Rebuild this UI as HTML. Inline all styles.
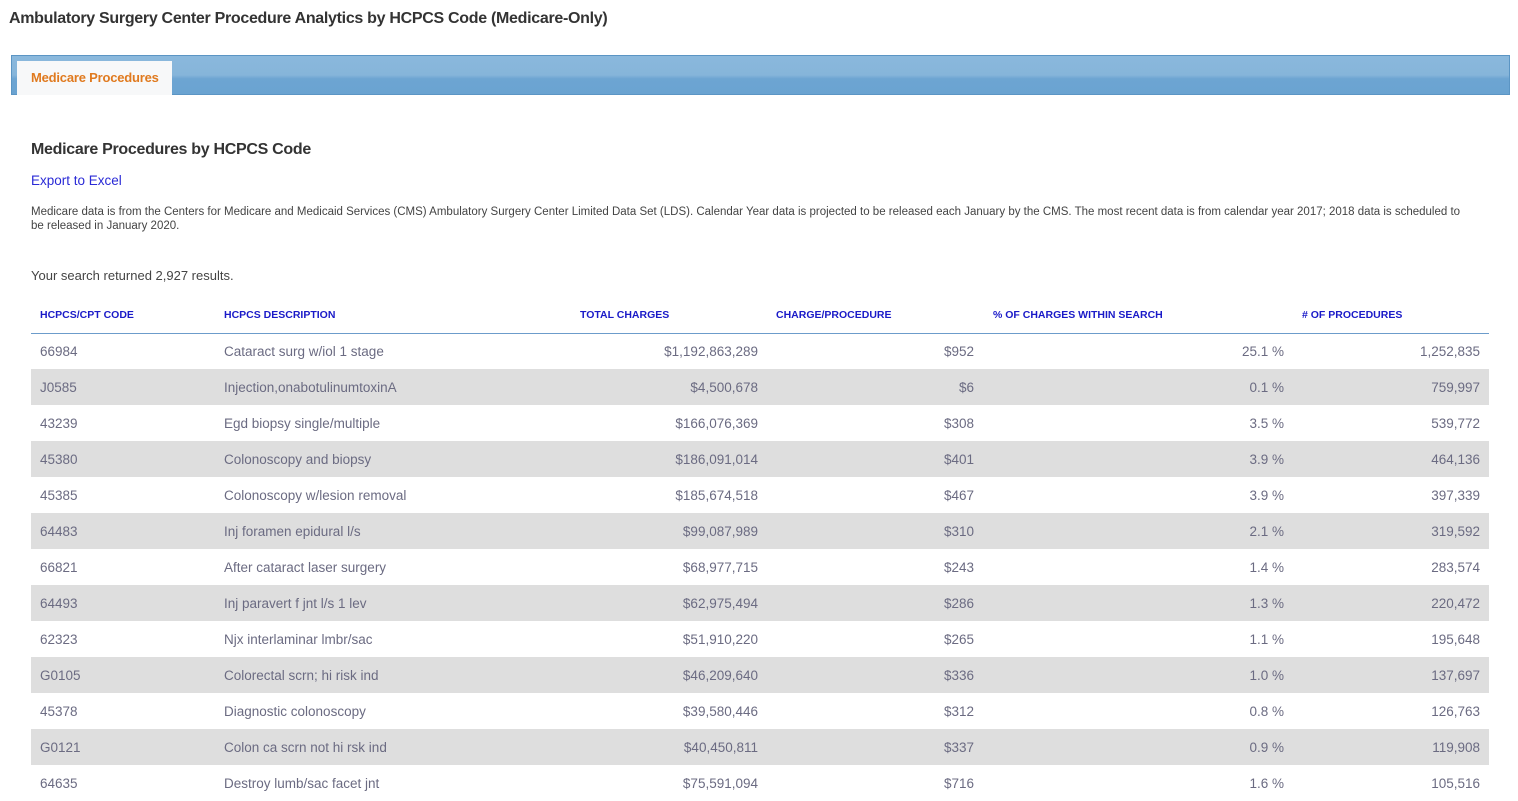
<!DOCTYPE html>
<html><head><meta charset="utf-8"><style>
*{margin:0;padding:0;box-sizing:border-box}
body{width:1518px;height:798px;overflow:hidden;background:#fff;font-family:"Liberation Sans",sans-serif;position:relative}
.t{position:absolute;white-space:nowrap}
h1{position:absolute;left:9px;top:10px;font-size:16px;font-weight:bold;color:#333;letter-spacing:-0.3px}
.bar{position:absolute;left:11px;top:55px;width:1499px;height:40px;border:1px solid #5b95c4;background:linear-gradient(#8ab8dc 0%,#86b5da 50%,#6da5d2 60%,#6aa3d1 100%)}
.tab{position:absolute;left:17px;top:61px;width:155px;height:34px;background:#f7f8f9;color:#e07a1f;font-weight:bold;font-size:13px;padding:9px 0 0 14px;letter-spacing:-0.2px}
h2{position:absolute;left:31px;top:141px;font-size:16px;font-weight:bold;color:#333;letter-spacing:-0.3px}
.ex{left:31px;top:173px;font-size:13.5px;color:#2a2ad6}
.p{left:31px;top:205px;font-size:11.5px;color:#444;line-height:14px;width:1440px;white-space:normal}
.res{left:31px;top:268px;font-size:13px;color:#444}
table{position:absolute;left:31px;top:298px;width:1458px;border-collapse:collapse;font-size:13.5px;color:#6b6b82}
th{font-size:10.5px;font-weight:bold;color:#1a1ac8;text-align:left;height:35px;border-bottom:1px solid #6c9ccb;padding:0}
td{height:36px;padding:0}
tr:nth-child(even) td{background:#dedede}
.r{text-align:right}
</style></head><body>
<h1>Ambulatory Surgery Center Procedure Analytics by HCPCS Code (Medicare-Only)</h1>
<div class="bar"></div>
<div class="tab">Medicare Procedures</div>
<h2>Medicare Procedures by HCPCS Code</h2>
<div class="t ex">Export to Excel</div>
<div class="t p">Medicare data is from the Centers for Medicare and Medicaid Services (CMS) Ambulatory Surgery Center Limited Data Set (LDS). Calendar Year data is projected to be released each January by the CMS. The most recent data is from calendar year 2017; 2018 data is scheduled to be released in January 2020.</div>
<div class="t res">Your search returned 2,927 results.</div>
<table>
<colgroup><col style="width:193px"><col style="width:356px"><col style="width:178px"><col style="width:216px"><col style="width:310px"><col style="width:205px"></colgroup>
<thead><tr><th style="padding-left:9px">HCPCS/CPT CODE</th><th>HCPCS DESCRIPTION</th><th>TOTAL CHARGES</th><th style="padding-left:18px">CHARGE/PROCEDURE</th><th style="padding-left:19px">% OF CHARGES WITHIN SEARCH</th><th style="padding-left:18px">&#35; OF PROCEDURES</th></tr></thead>
<tbody>
<tr><td style="padding-left:9px">66984</td><td>Cataract surg w/iol 1 stage</td><td class="r">$1,192,863,289</td><td class="r">$952</td><td class="r">25.1 %</td><td class="r" style="padding-right:9px">1,252,835</td></tr>
<tr><td style="padding-left:9px">J0585</td><td>Injection,onabotulinumtoxinA</td><td class="r">$4,500,678</td><td class="r">$6</td><td class="r">0.1 %</td><td class="r" style="padding-right:9px">759,997</td></tr>
<tr><td style="padding-left:9px">43239</td><td>Egd biopsy single/multiple</td><td class="r">$166,076,369</td><td class="r">$308</td><td class="r">3.5 %</td><td class="r" style="padding-right:9px">539,772</td></tr>
<tr><td style="padding-left:9px">45380</td><td>Colonoscopy and biopsy</td><td class="r">$186,091,014</td><td class="r">$401</td><td class="r">3.9 %</td><td class="r" style="padding-right:9px">464,136</td></tr>
<tr><td style="padding-left:9px">45385</td><td>Colonoscopy w/lesion removal</td><td class="r">$185,674,518</td><td class="r">$467</td><td class="r">3.9 %</td><td class="r" style="padding-right:9px">397,339</td></tr>
<tr><td style="padding-left:9px">64483</td><td>Inj foramen epidural l/s</td><td class="r">$99,087,989</td><td class="r">$310</td><td class="r">2.1 %</td><td class="r" style="padding-right:9px">319,592</td></tr>
<tr><td style="padding-left:9px">66821</td><td>After cataract laser surgery</td><td class="r">$68,977,715</td><td class="r">$243</td><td class="r">1.4 %</td><td class="r" style="padding-right:9px">283,574</td></tr>
<tr><td style="padding-left:9px">64493</td><td>Inj paravert f jnt l/s 1 lev</td><td class="r">$62,975,494</td><td class="r">$286</td><td class="r">1.3 %</td><td class="r" style="padding-right:9px">220,472</td></tr>
<tr><td style="padding-left:9px">62323</td><td>Njx interlaminar lmbr/sac</td><td class="r">$51,910,220</td><td class="r">$265</td><td class="r">1.1 %</td><td class="r" style="padding-right:9px">195,648</td></tr>
<tr><td style="padding-left:9px">G0105</td><td>Colorectal scrn; hi risk ind</td><td class="r">$46,209,640</td><td class="r">$336</td><td class="r">1.0 %</td><td class="r" style="padding-right:9px">137,697</td></tr>
<tr><td style="padding-left:9px">45378</td><td>Diagnostic colonoscopy</td><td class="r">$39,580,446</td><td class="r">$312</td><td class="r">0.8 %</td><td class="r" style="padding-right:9px">126,763</td></tr>
<tr><td style="padding-left:9px">G0121</td><td>Colon ca scrn not hi rsk ind</td><td class="r">$40,450,811</td><td class="r">$337</td><td class="r">0.9 %</td><td class="r" style="padding-right:9px">119,908</td></tr>
<tr><td style="padding-left:9px">64635</td><td>Destroy lumb/sac facet jnt</td><td class="r">$75,591,094</td><td class="r">$716</td><td class="r">1.6 %</td><td class="r" style="padding-right:9px">105,516</td></tr>
</tbody></table>
</body></html>
